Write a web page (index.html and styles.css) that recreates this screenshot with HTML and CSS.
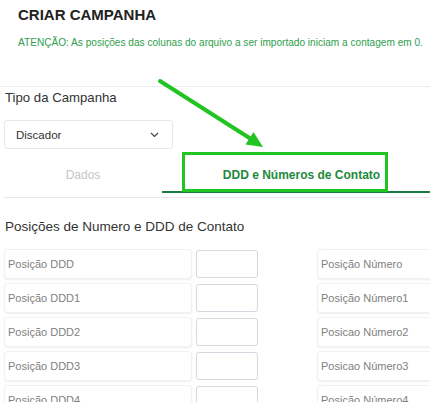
FILE: index.html
```
<!DOCTYPE html>
<html lang="pt-BR">
<head>
<meta charset="utf-8">
<title>Criar Campanha</title>
<link rel="stylesheet" href="styles.css">
</head>
<body>
<div class="page">
  <header class="head">
    <h1 class="title">CRIAR CAMPANHA</h1>
    <p class="notice">ATENÇÃO: As posições das colunas do arquivo a ser importado iniciam a contagem em 0.</p>
  </header>
  <section class="panel">
    <div class="field-label">Tipo da Campanha</div>
    <div class="select">
      <span>Discador</span>
      <svg class="chev" width="9" height="6" viewBox="0 0 9 6"><path d="M1 1 L4.5 4.5 L8 1" fill="none" stroke="#444" stroke-width="1.2"/></svg>
    </div>
    <nav class="tabs">
      <div class="tab">Dados</div>
      <div class="tab active">DDD e Números de Contato</div>
    </nav>
    <h2 class="section-title">Posições de Numero e DDD de Contato</h2>
    <div class="rows">
      <div class="row"><div class="field">Posição DDD</div><div class="box"></div><div class="field right">Posição Número</div></div>
      <div class="row"><div class="field">Posição DDD1</div><div class="box"></div><div class="field right">Posição Número1</div></div>
      <div class="row"><div class="field">Posição DDD2</div><div class="box"></div><div class="field right">Posicao Número2</div></div>
      <div class="row"><div class="field">Posição DDD3</div><div class="box"></div><div class="field right">Posicao Número3</div></div>
      <div class="row"><div class="field">Posição DDD4</div><div class="box"></div><div class="field right">Posição Número4</div></div>
    </div>
  </section>
  <div class="annot-box"></div>
  <svg class="annot-arrow" width="430" height="402" viewBox="0 0 430 402">
    <line x1="160" y1="81" x2="251" y2="139" stroke="#22c422" stroke-width="4" stroke-linecap="round"/>
    <polygon points="263,147 245.5,144.5 253.5,132" fill="#22c422"/>
  </svg>
</div>
</body>
</html>
```

FILE: styles.css
```
* { box-sizing: border-box; }
html, body { margin: 0; padding: 0; background: #fff; }
body { font-family: "Liberation Sans", Arial, sans-serif; color: #333; overflow: hidden; }
.page { position: relative; width: 430px; height: 402px; overflow: hidden; }

.head { padding: 6px 18px 37px; }
.title { margin: 0; font-size: 15px; line-height: 18px; font-weight: bold; color: #222; }
.notice { margin: 12px 0 0; font-size: 10.1px; line-height: 13px; color: #2f9e4c; white-space: nowrap; }

.panel { border-top: 1px solid #ececec; padding: 0 0 0 4px; }
.field-label { margin-top: 3px; padding-left: 1px; font-size: 13.2px; line-height: 16px; color: #333; }

.select {
  margin-top: 14px; width: 169px; height: 29px;
  border: 1px solid #e8e8e8; border-radius: 3px;
  display: flex; align-items: center; justify-content: space-between;
  padding: 1px 13px 0 11px; font-size: 11.5px; line-height: 14px; color: #333;
}
.chev { display: block; }

.tabs { display: flex; width: 437px; margin-top: 10px; padding-bottom: 4px; border-bottom: 1px solid #e8e8e8; }
.tab { padding: 9px 0 8px; font-size: 12px; line-height: 15px; text-align: center; color: #c6c6c6; border-bottom: 2px solid transparent; }
.tab:first-child { width: 158px; }
.tab.active { width: 279px; color: #1d8a3d; font-weight: bold; border-bottom-color: #1a7b3f; }

.section-title { margin: 21px 0 0; padding-left: 1px; font-size: 13.5px; line-height: 16px; font-weight: normal; color: #333; }

.rows { margin-top: 14px; display: flex; flex-direction: column; gap: 4px; }
.row { display: flex; align-items: center; height: 30px; }
.field {
  width: 188px; height: 30px; background: #fff;
  border: 1px solid #f1f1f1; border-radius: 4px;
  box-shadow: 0 1px 2px rgba(0,0,0,0.07);
  display: flex; align-items: center; padding-left: 3px;
  font-size: 11px; line-height: 13px; color: #808080; flex-shrink: 0;
}
.box { width: 62px; height: 28px; margin-left: 4px; border: 1px solid #d3d9e1; border-radius: 3px; flex-shrink: 0; }
.field.right { margin-left: 59px; width: 130px; }

.annot-box { position: absolute; left: 182px; top: 152px; width: 206px; height: 40px; border: 3px solid #22c422; }
.annot-arrow { position: absolute; left: 0; top: 0; pointer-events: none; }
```
